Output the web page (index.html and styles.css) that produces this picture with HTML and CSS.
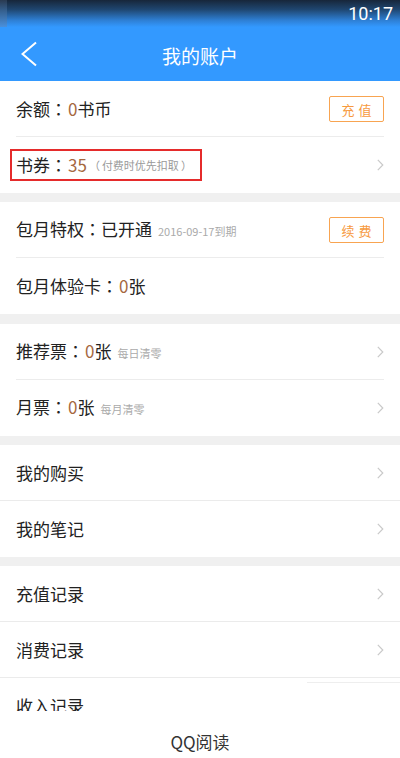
FILE: index.html
```html
<!DOCTYPE html>
<html lang="zh-CN">
<head>
<meta charset="utf-8">
<title>我的账户</title>
<link rel="stylesheet" href="styles.css">
</head>
<body>
<div class="page">
  <div class="status">
    <div class="status-edge"></div>
    <div class="time">10:17</div>
  </div>
  <div class="header">
    <div class="back">
      <svg width="18" height="26" viewBox="0 0 18 26"><polyline points="15,1.5 1.5,13 15,24.5" fill="none" stroke="#fff" stroke-width="2"/></svg>
    </div>
    <div class="title">我的账户</div>
    <div></div>
  </div>

  <div class="group">
    <div class="row inset">
      <div class="label">余额<span class="p">：</span><span class="num">0</span>书币</div>
      <div class="btn">充值</div>
    </div>
    <div class="row">
      <div class="label mark">书券<span class="p">：</span><span class="num">35</span><span class="paren"><span class="p pl">（</span>付费时优先扣取<span class="p pr">）</span></span></div>
      <svg class="chev" width="7" height="12" viewBox="0 0 7 12"><polyline points="0.8,0.8 5.8,6 0.8,11.2" fill="none" stroke="#c9c9c9" stroke-width="1.2"/></svg>
    </div>
  </div>

  <div class="group">
    <div class="row inset">
      <div class="label">包月特权<span class="p">：</span>已开通<span class="note">2016-09-17到期</span></div>
      <div class="btn">续费</div>
    </div>
    <div class="row">
      <div class="label">包月体验卡<span class="p">：</span><span class="num">0</span>张</div>
    </div>
  </div>

  <div class="group">
    <div class="row inset">
      <div class="label">推荐票<span class="p">：</span><span class="num">0</span>张<span class="note">每日清零</span></div>
      <svg class="chev" width="7" height="12" viewBox="0 0 7 12"><polyline points="0.8,0.8 5.8,6 0.8,11.2" fill="none" stroke="#c9c9c9" stroke-width="1.2"/></svg>
    </div>
    <div class="row">
      <div class="label">月票<span class="p">：</span><span class="num">0</span>张<span class="note">每月清零</span></div>
      <svg class="chev" width="7" height="12" viewBox="0 0 7 12"><polyline points="0.8,0.8 5.8,6 0.8,11.2" fill="none" stroke="#c9c9c9" stroke-width="1.2"/></svg>
    </div>
  </div>

  <div class="group">
    <div class="row full">
      <div class="label">我的购买</div>
      <svg class="chev" width="7" height="12" viewBox="0 0 7 12"><polyline points="0.8,0.8 5.8,6 0.8,11.2" fill="none" stroke="#c9c9c9" stroke-width="1.2"/></svg>
    </div>
    <div class="row">
      <div class="label">我的笔记</div>
      <svg class="chev" width="7" height="12" viewBox="0 0 7 12"><polyline points="0.8,0.8 5.8,6 0.8,11.2" fill="none" stroke="#c9c9c9" stroke-width="1.2"/></svg>
    </div>
  </div>

  <div class="group last">
    <div class="row full">
      <div class="label">充值记录</div>
      <svg class="chev" width="7" height="12" viewBox="0 0 7 12"><polyline points="0.8,0.8 5.8,6 0.8,11.2" fill="none" stroke="#c9c9c9" stroke-width="1.2"/></svg>
    </div>
    <div class="row full">
      <div class="label">消费记录</div>
      <svg class="chev" width="7" height="12" viewBox="0 0 7 12"><polyline points="0.8,0.8 5.8,6 0.8,11.2" fill="none" stroke="#c9c9c9" stroke-width="1.2"/></svg>
    </div>
    <div class="row">
      <div class="label">收入记录</div>
    </div>
  </div>

  <div class="patch"></div>
  <div class="caption">QQ阅读</div>
</div>
</body>
</html>
```

FILE: styles.css
```css
html, body {
  margin: 0;
  padding: 0;
}
body {
  background: #ffffff;
  font-family: "Noto Sans CJK SC", "Noto Sans", sans-serif;
  color: #222;
}
.page {
  position: relative;
  width: 400px;
  height: 758px;
  overflow: hidden;
  background: #f0f0f0;
}
.status {
  height: 27px;
  display: flex;
  align-items: center;
  justify-content: space-between;
  background: linear-gradient(to bottom, #17263a 0%, #1f4670 35%, #2e7fd4 75%, #3399ff 100%);
}
.status-edge {
  width: 7px;
  align-self: stretch;
  background: linear-gradient(to bottom, #2a3a50 0%, #35608f 40%, #4a90dc 100%);
}
.time {
  font-family: Roboto, "Noto Sans", sans-serif;
  font-size: 18px;
  color: #fff;
  padding-right: 7px;
  line-height: 27px;
}
.header {
  height: 54px;
  background: #3399ff;
  display: grid;
  grid-template-columns: 1fr auto 1fr;
  align-items: center;
}
.back {
  padding-left: 21px;
  display: flex;
  align-items: center;
}
.back svg {
  display: block;
}
.title {
  font-size: 19px;
  color: #fff;
  line-height: 1;
  padding-top: 2px;
}
.group {
  background: #fff;
  margin-bottom: 9px;
}
.group:nth-of-type(4) {
  margin-bottom: 10px;
}
.row {
  height: 56px;
  box-sizing: border-box;
  display: flex;
  align-items: center;
  justify-content: space-between;
  padding: 0 16px;
  position: relative;
}
.row.inset::after {
  content: "";
  position: absolute;
  left: 16px;
  right: 16px;
  bottom: 0;
  height: 1px;
  background: #ececec;
}
.row.full {
  border-bottom: 1px solid #ebebeb;
}
.label {
  font-size: 17px;
  line-height: 24px;
  display: flex;
  align-items: baseline;
  white-space: nowrap;
}
.p {
  font-family: "Noto Sans CJK TC", "Noto Sans CJK SC", sans-serif;
}
.num {
  color: #a5683f;
  margin-left: 1px;
}
.paren {
  font-size: 11px;
  color: #999;
  margin-left: 2px;
}
.pl {
  margin-right: 2px;
}
.pr {
  margin-left: 2px;
}
.note {
  font-size: 11px;
  color: #aaa;
  margin-left: 6px;
}
.mark {
  border: 2px solid #e52b2b;
  height: 32px;
  box-sizing: border-box;
  align-items: center;
  padding: 0 8px 0 4px;
  margin-left: -6px;
}
.mark .paren {
  align-self: center;
}
.btn {
  width: 55px;
  height: 26px;
  box-sizing: border-box;
  border: 1px solid #f8a451;
  border-radius: 2px;
  color: #f79a3e;
  font-size: 13px;
  letter-spacing: 4px;
  text-indent: 4px;
  display: flex;
  align-items: center;
  justify-content: center;
}
.chev {
  display: block;
}
.patch {
  position: absolute;
  left: 307px;
  right: 0;
  top: 682px;
  height: 30px;
  background: #fff;
  border-top: 1px solid #eeeeee;
}
.caption {
  position: absolute;
  left: 0;
  right: 0;
  bottom: 0;
  height: 47px;
  background: #fff;
  display: flex;
  align-items: center;
  justify-content: center;
  font-size: 17px;
  color: #333;
  padding-top: 14px;
  box-sizing: border-box;
}
```
